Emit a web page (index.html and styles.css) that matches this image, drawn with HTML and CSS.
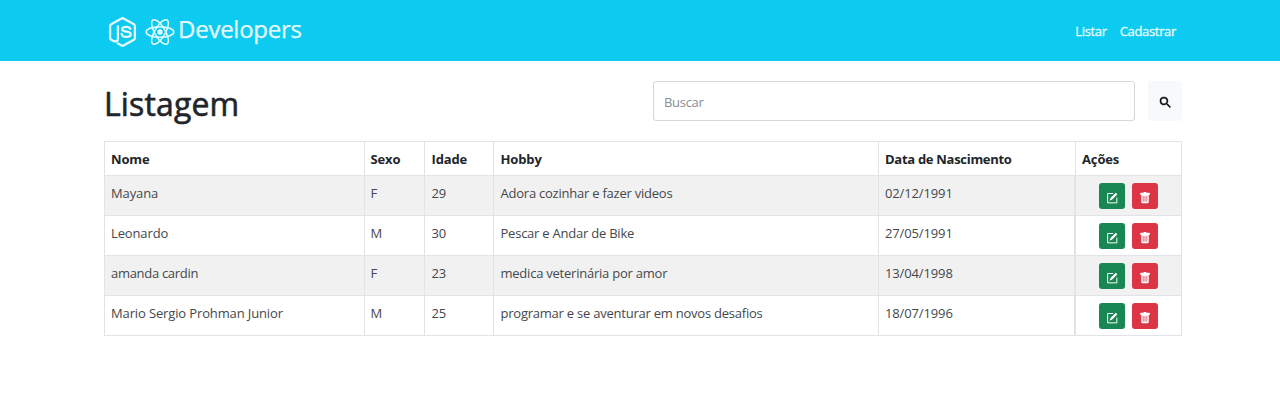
FILE: index.html
```html
<!DOCTYPE html>
<html lang="pt-BR">
<head>
<meta charset="utf-8">
<title>Developers</title>
<link rel="stylesheet" href="styles.css">
</head>
<body>
<svg width="0" height="0" class="sprite">
  <symbol id="edit" viewBox="0 0 16 16"><path fill="none" stroke="currentColor" stroke-width="1.3" d="M9.500 2H2.200v12.500h12.300V7.500"/><path d="M13.200.9l2 2L8.300 9.900 4.700 11.500 6.200 7.800z"/></symbol>
  <symbol id="trash" viewBox="0 0 16 16"><path d="M2.500 1a1 1 0 0 0-1 1v1a1 1 0 0 0 1 1H3v9a2 2 0 0 0 2 2h6a2 2 0 0 0 2-2V4h.5a1 1 0 0 0 1-1V2a1 1 0 0 0-1-1H10a1 1 0 0 0-1-1H7a1 1 0 0 0-1 1H2.500zm3 4a.5.5 0 0 1 .5.5v7a.5.5 0 0 1-1 0v-7a.5.5 0 0 1 .5-.5zM8 5a.5.5 0 0 1 .5.5v7a.5.5 0 0 1-1 0v-7A.5.5 0 0 1 8 5zm3 .5v7a.5.5 0 0 1-1 0v-7a.5.5 0 0 1 1 0z"/></symbol>
</svg>
<header class="navbar">
  <div class="brand">
    <svg class="node" viewBox="0 0 28 32" fill="none" stroke="currentColor" stroke-width="2.300" stroke-linejoin="round" stroke-linecap="round"><path d="M9.500 27.500 13 29.600q1 .6 2 0L25.400 23.700q1-.6 1-1.700V10q0-1.100-1-1.700L15 2.400q-1-.6-2 0L2.600 8.300q-1 .6-1 1.700v12q0 1.100 1 1.700l2 1.100q4.800 1.800 4.800-2.300V10.500"/><path d="M21.800 12.900q-.5-2.100-4.100-2.100-4 0-4 2.500c0 3.600 8.500 1.200 8.500 4.900q0 2.700-4.300 2.700-4.400 0-4.700-2.900"/></svg>
    <svg class="react" viewBox="0 0 30 30" fill="none" stroke="currentColor" stroke-width="1.500"><ellipse cx="15" cy="15" rx="13.900" ry="5.300"/><ellipse cx="15" cy="15" rx="13.900" ry="5.300" transform="rotate(60 15 15)"/><ellipse cx="15" cy="15" rx="13.900" ry="5.300" transform="rotate(120 15 15)"/><circle cx="15" cy="15" r="2.700" fill="currentColor" stroke="none"/></svg>
    <span class="name">Developers</span>
  </div>
  <nav class="links"><a>Listar</a><a>Cadastrar</a></nav>
</header>
<main class="page">
  <div class="toolbar">
    <h1>Listagem</h1>
    <div class="search"><span>Buscar</span></div>
    <div class="find"><svg viewBox="0 0 24 24"><path d="M15.500 14h-.79l-.28-.27A6.470 6.470 0 0 0 16 9.500 6.500 6.500 0 1 0 9.500 16c1.610 0 3.090-.59 4.230-1.570l.27.28v.79l5 4.990L20.490 19l-4.990-5zm-6 0C7.010 14 5 11.990 5 9.500S7.010 5 9.500 5 14 7.010 14 9.500 11.990 14 9.500 14z" stroke="currentColor" stroke-width=".6"/></svg></div>
  </div>
  <div class="table">
    <div class="row head"><b>Nome</b><b>Sexo</b><b>Idade</b><b>Hobby</b><b class="birth">Data de Nascimento</b><b>Ações</b></div>
    <div class="row odd"><span>Mayana</span><span>F</span><span>29</span><span class="hobby">Adora cozinhar e fazer videos</span><span>02/12/1991</span><div class="actions"><i class="edit"><svg><use href="#edit"/></svg></i><i class="trash"><svg><use href="#trash"/></svg></i></div></div>
    <div class="row"><span>Leonardo</span><span>M</span><span>30</span><span class="hobby">Pescar e Andar de Bike</span><span>27/05/1991</span><div class="actions"><i class="edit"><svg><use href="#edit"/></svg></i><i class="trash"><svg><use href="#trash"/></svg></i></div></div>
    <div class="row odd"><span class="tight">amanda cardin</span><span>F</span><span>23</span><span class="hobby">medica veterinária por amor</span><span>13/04/1998</span><div class="actions"><i class="edit"><svg><use href="#edit"/></svg></i><i class="trash"><svg><use href="#trash"/></svg></i></div></div>
    <div class="row"><span>Mario Sergio Prohman Junior</span><span>M</span><span>25</span><span class="hobby">programar e se aventurar em novos desafios</span><span>18/07/1996</span><div class="actions"><i class="edit"><svg><use href="#edit"/></svg></i><i class="trash"><svg><use href="#trash"/></svg></i></div></div>
  </div>
</main>
</body>
</html>
```
FILE: styles.css
```css
* { box-sizing: border-box; }
body { margin: 0; background: #fff; color: #212529; font: 13px/20px "Open Sans", "Noto Sans", sans-serif; }
.sprite { position: absolute; }
.navbar { height: 61.400px; background: #0dcaf0; color: #e6fbff; display: flex; justify-content: space-between; padding: 0 104px 0 108px; }
.brand { display: flex; align-items: center; height: 63px; }
.node { width: 29px; height: 32px; }
.react { width: 30px; height: 30px; margin-left: 8px; }
.name { font-size: 24px; line-height: 32px; margin: -5px 0 0 3px; letter-spacing: -.25px; -webkit-text-stroke: .25px; }
.links { display: flex; align-items: center; gap: 13px; height: 62px; letter-spacing: -.33px; -webkit-text-stroke: .3px; }
.page { padding: 20px 97px 0 104px; }
.toolbar { display: flex; height: 40px; }
h1 { margin: 0; width: 549px; font-size: 32px; line-height: 45px; font-weight: 500; letter-spacing: .15px; -webkit-text-stroke: .6px; }
.search { width: 482px; height: 40px; border: 1px solid #d3d8dd; border-radius: 3px; padding: 10px; color: #868e96; letter-spacing: -.3px; }
.find { margin-left: 13px; width: 34px; height: 40px; background: #f8f9fa; border-radius: 3px; display: flex; align-items: center; justify-content: center; }
.find svg { width: 15px; height: 15px; margin-top: 3px; }
.table { margin-top: 20px; width: 1078px; border-top: 1px solid #e1e4e7; border-left: 1px solid #e1e4e7; }
.row { display: grid; grid-template-columns: 259.500px 60.500px 69px 385px 197px 1fr; height: 40px; border-bottom: 1px solid #e1e4e7; }
.row > * { border-right: 1px solid #e1e4e7; padding: 7px 6px 6px; white-space: nowrap; color: #44484c; letter-spacing: -.13px; }
.row > :nth-child(3), .row > :nth-child(4) { padding-left: 6.500px; }
.row.head { height: 34px; }
.row.head > * { color: #212529; }
.row > .hobby { letter-spacing: -.23px; }
.row > .tight { letter-spacing: -.3px; }
.row.head > .birth { letter-spacing: -.29px; }
.odd { background: #f1f1f1; }
.row > .actions { display: flex; gap: 6.500px; padding: 7px 0 0 22.500px; }
.row:not(.head) > :nth-child(5) { border-right-width: 2px; }
.actions i { width: 26.500px; height: 26px; border-radius: 3px; display: flex; justify-content: center; padding-top: 9px; color: #fff; }
.actions svg { width: 12px; height: 12px; fill: currentColor; }
.edit { background: #198754; }
.trash { background: #dc3545; }
```
